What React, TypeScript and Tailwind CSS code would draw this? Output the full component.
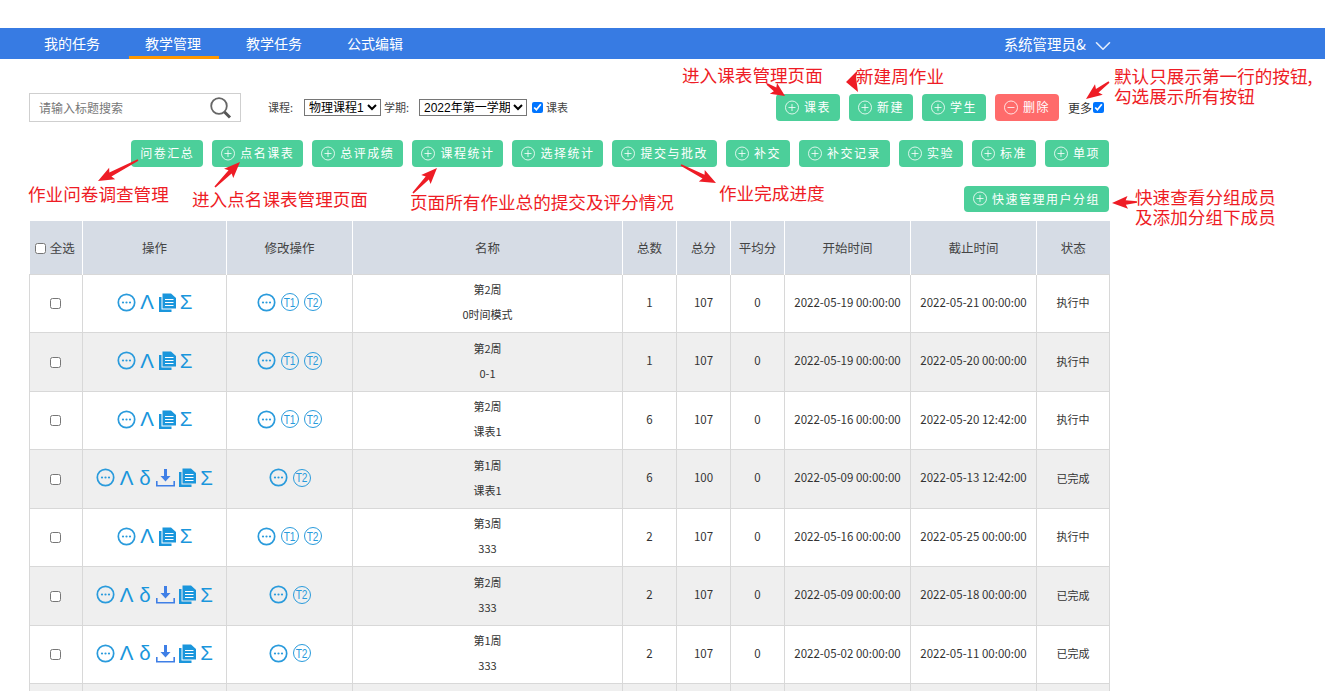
import { ReactNode } from "react";
import { ChevronDown } from "lucide-react";

const font = "font-['Noto_Sans_CJK_SC','Microsoft_YaHei',sans-serif]";

const PlusCircle = ({ minus = false }: { minus?: boolean }) => (
  <svg width="14" height="15" viewBox="0 0 14 15" fill="none" stroke="#ffffff" strokeOpacity="0.8" className="shrink-0">
    <circle cx="7" cy="7.500" r="6.500" strokeWidth="1" />
    <path d={minus ? "M3.500 7.500h7" : "M3.500 7.500h7M7 4v7"} strokeWidth="1" />
  </svg>
);

const ActionButton = ({ label, icon = true, red = false, h = "h-[27px]" }: { label: string; icon?: boolean; red?: boolean; h?: string }) => (
  <button className={`flex ${h} shrink-0 items-center gap-[5px] rounded-[4px] px-[9px] pb-[1px] text-[12px] tracking-[1.5px] text-white ${red ? "bg-[#ff6b6b]" : "bg-[#4ccf9a]"}`}>
    {icon && <PlusCircle minus={red} />}
    <span>{label}</span>
  </button>
);

const MoreIcon = () => (
  <svg width="19" height="19" viewBox="0 0 19 19" fill="none" className="shrink-0">
    <circle cx="9.500" cy="9.500" r="8.200" stroke="#2a9bdc" strokeWidth="1.700" />
    <circle cx="6" cy="9.500" r="1.100" fill="#2a9bdc" />
    <circle cx="9.500" cy="9.500" r="1.100" fill="#2a9bdc" />
    <circle cx="13" cy="9.500" r="1.100" fill="#2a9bdc" />
  </svg>
);

const FileIcon = () => (
  <svg width="17" height="19" viewBox="0 0 17 19" className="shrink-0">
    <path d="M0 4h2.500v12.500h10V19H0z" fill="#1a96dc" />
    <path d="M3.500 .5h8.500L17 5v10.500H3.500z" fill="#1a96dc" />
    <path d="M6 6.500h8.500M6 9.500h8.500M6 12.500h8.500" stroke="#ffffff" strokeWidth="1" />
  </svg>
);

const DownloadIcon = () => (
  <svg width="19" height="19" viewBox="0 0 19 19" className="shrink-0">
    <path d="M8 1h3v7h3.500L9.500 13.500 4.500 8H8z" fill="#3f7fe6" />
    <path d="M.8 13v4.800h17.400V13" fill="none" stroke="#3f7fe6" strokeWidth="1.600" />
  </svg>
);

const Glyph = ({ children, w }: { children: ReactNode; w: string }) => (
  <span className={`${w} shrink-0 text-center font-['Liberation_Sans',sans-serif] text-[20.500px] leading-[20px] text-[#1a96dc]`}>{children}</span>
);

const TBadge = ({ n }: { n: string }) => (
  <span className="flex h-[18px] w-[18px] shrink-0 items-center justify-center rounded-full border border-[#2a9bdc] font-['Liberation_Sans',sans-serif] text-[13px] leading-none text-[#2a9bdc]">
    <span className="scale-x-[0.78]">{n}</span>
  </span>
);

type Row = { week: string; name: string; total: number; score: number; start: string; end: string; done: boolean };

const rows: Row[] = [
  { week: "第2周", name: "0时间模式", total: 1, score: 107, start: "2022-05-19 00:00:00", end: "2022-05-21 00:00:00", done: false },
  { week: "第2周", name: "0-1", total: 1, score: 107, start: "2022-05-19 00:00:00", end: "2022-05-20 00:00:00", done: false },
  { week: "第2周", name: "课表1", total: 6, score: 107, start: "2022-05-16 00:00:00", end: "2022-05-20 12:42:00", done: false },
  { week: "第1周", name: "课表1", total: 6, score: 100, start: "2022-05-09 00:00:00", end: "2022-05-13 12:42:00", done: true },
  { week: "第3周", name: "333", total: 2, score: 107, start: "2022-05-16 00:00:00", end: "2022-05-25 00:00:00", done: false },
  { week: "第2周", name: "333", total: 2, score: 107, start: "2022-05-09 00:00:00", end: "2022-05-18 00:00:00", done: true },
  { week: "第1周", name: "333", total: 2, score: 107, start: "2022-05-02 00:00:00", end: "2022-05-11 00:00:00", done: true },
];

const headers = ["操作", "修改操作", "名称", "总数", "总分", "平均分", "开始时间", "截止时间", "状态"];

const Note = ({ className, children }: { className: string; children: ReactNode }) => (
  <div className={`absolute whitespace-nowrap text-[17.600px] leading-[20px] text-[#ee1c25] ${className}`}>{children}</div>
);

// tail x, y then tip x, y of the red callouts
const arrows = [
  [138, 160, 98, 181],
  [215, 187, 240, 162],
  [413, 193, 437, 168],
  [681, 165, 716, 183],
  [767, 84, 785, 96],
  [1109, 82, 1086, 99],
  [1137, 202, 1112, 203],
];

const arrowPath = ([x1, y1, x2, y2]: number[]) => {
  const len = Math.hypot(x2 - x1, y2 - y1);
  const ux = (x2 - x1) / len;
  const uy = (y2 - y1) / len;
  const px = -uy;
  const py = ux;
  const head = Math.min(14, len * 0.55);
  const at = (along: number, side: number) => `${x1 + ux * along + px * side} ${y1 + uy * along + py * side}`;
  const neck = len - head;
  return `M${at(0, 0.8)}L${at(neck, 2.2)}L${at(neck - 2, 6.5)}L${x2} ${y2}L${at(neck - 2, -6.5)}L${at(neck, -2.2)}L${at(0, -0.8)}z`;
};

const cell = "border border-[#d8d8d8] pb-[2px]";

const App = () => {
  return (
    <div className={`relative h-[691px] w-[1325px] overflow-hidden bg-white text-[#333] ${font}`}>
      <div className="h-[28px]" />
      <nav className="flex h-[31px] items-stretch bg-[#377be3] pl-[28px] pr-[209px] text-[14px] text-white">
        <div className="flex gap-[11px]">
          {["我的任务", "教学管理", "教学任务", "公式编辑"].map((item, i) => (
            <div key={item} className={`flex w-[90px] items-center justify-center pr-[2px] ${i === 1 ? "border-b-[3px] border-[#ff9800] pt-[3px]" : ""}`}>
              {item}
            </div>
          ))}
        </div>
        <div className="ml-auto flex items-center gap-[4px] text-[14.500px]">
          <span>系统管理员&amp;</span>
          <ChevronDown size={26} strokeWidth={1.5} className="mt-[3px] -my-[2px] text-white/85" />
        </div>
      </nav>

      <div className="ml-[29px] w-[1080px]">
        <div className="mt-[34px] flex h-[29px] items-center">
          <div className="flex h-[29px] w-[212px] items-center justify-between border border-[#cfcfcf] pl-[9px] pr-[7px] text-[12px] text-[#777]">
            <span>请输入标题搜索</span>
            <svg width="24" height="24" viewBox="0 0 24 24" fill="none">
              <circle cx="10" cy="10" r="7.800" stroke="#666" strokeWidth="1.800" />
              <path d="M15.500 16l5.500 5.500" stroke="#555" strokeWidth="3" />
            </svg>
          </div>
          <div className="ml-[27px] flex items-center text-[11px] text-[#444]">
            <span className="w-[36px]">课程:</span>
            <select className="h-[17px] w-[77px] border border-[#767676] font-['Liberation_Sans','Noto_Sans_CJK_SC',sans-serif] text-[12px] text-black">
              <option>物理课程1</option>
            </select>
            <span className="ml-[3px] w-[35px]">学期:</span>
            <select className="h-[17px] w-[108px] border border-[#767676] font-['Liberation_Sans','Noto_Sans_CJK_SC',sans-serif] text-[12px] text-black">
              <option>2022年第一学期</option>
            </select>
            <input type="checkbox" defaultChecked className="ml-[5px] h-[11px] w-[11px]" />
            <span className="ml-[3px]">课表</span>
          </div>
          <div className="ml-auto flex items-center gap-[9px]">
            <ActionButton label="课表" />
            <ActionButton label="新建" />
            <ActionButton label="学生" />
            <ActionButton label="删除" red />
            <div className="flex w-[41px] items-center gap-[1px] text-[12px] text-[#333]">
              <span>更多</span>
              <input type="checkbox" defaultChecked className="h-[11px] w-[11px]" />
            </div>
          </div>
        </div>

        <div className="mt-[18px] flex justify-end gap-[9px]">
          <ActionButton label="问卷汇总" icon={false} />
          <ActionButton label="点名课表" />
          <ActionButton label="总评成绩" />
          <ActionButton label="课程统计" />
          <ActionButton label="选择统计" />
          <ActionButton label="提交与批改" />
          <ActionButton label="补交" />
          <ActionButton label="补交记录" />
          <ActionButton label="实验" />
          <ActionButton label="标准" />
          <ActionButton label="单项" />
        </div>

        <div className="mt-[19px] flex justify-end">
          <ActionButton label="快速管理用户分组" h="h-[26px]" />
        </div>

        <table className="mt-[9px] w-[1080px] table-fixed border-collapse text-center text-[11.500px]">
          <colgroup>
            <col className="w-[53px]" />
            <col className="w-[144px]" />
            <col className="w-[126px]" />
            <col className="w-[270px]" />
            <col className="w-[54px]" />
            <col className="w-[54px]" />
            <col className="w-[54px]" />
            <col className="w-[126px]" />
            <col className="w-[126px]" />
            <col className="w-[73px]" />
          </colgroup>
          <thead>
            <tr className="h-[53px] bg-[#d6dce5] text-[12.500px] text-[#444]">
              <th className="border-r border-white pt-[2px] font-normal">
                <label className="flex items-center justify-center gap-[4px] pr-[2px]">
                  <input type="checkbox" className="h-[11px] w-[11px]" />
                  全选
                </label>
              </th>
              {headers.map((h) => (
                <th key={h} className="border-r border-white pt-[2px] font-normal last:border-r-0">{h}</th>
              ))}
            </tr>
          </thead>
          <tbody>
            {rows.map((row, i) => (
              <tr key={i} className={`h-[58.500px] ${i % 2 === 1 ? "bg-[#efefef]" : "bg-white"}`}>
                <td className={cell}>
                  <input type="checkbox" className="mr-[2px] h-[11px] w-[11px] align-middle" />
                </td>
                <td className={cell}>
                  <div className="flex items-center justify-center gap-[4px]">
                    <MoreIcon />
                    <Glyph w="w-[15px]">Λ</Glyph>
                    {row.done && <Glyph w="w-[14px]">δ</Glyph>}
                    {row.done && <DownloadIcon />}
                    <FileIcon />
                    <Glyph w="w-[13px]">Σ</Glyph>
                  </div>
                </td>
                <td className={cell}>
                  <div className="flex items-center justify-center gap-[5px]">
                    <MoreIcon />
                    {!row.done && <TBadge n="T1" />}
                    <TBadge n="T2" />
                  </div>
                </td>
                <td className={`${cell} text-[11px] leading-[25px]`}>
                  <div>{row.week}</div>
                  <div>{row.name}</div>
                </td>
                <td className={cell}>{row.total}</td>
                <td className={cell}>{row.score}</td>
                <td className={cell}>0</td>
                <td className={cell}>{row.start}</td>
                <td className={cell}>{row.end}</td>
                <td className={`${cell} text-[11px]`}>{row.done ? "已完成" : "执行中"}</td>
              </tr>
            ))}
            {/* next row only just enters the window */}
            <tr className="h-[58.500px] bg-[#efefef]">
              {Array.from({ length: 10 }).map((_, i) => (
                <td key={i} className={cell} />
              ))}
            </tr>
          </tbody>
        </table>
      </div>

      {/* annotations */}
      <svg width="1325" height="691" className="pointer-events-none absolute left-0 top-0">
        {arrows.map((a) => (
          <path key={a.join()} d={arrowPath(a)} fill="#ee1c25" />
        ))}
        <path d="M846 82L858 70L856 77L858 92z" fill="#ee1c25" />
      </svg>
      <Note className="left-[28px] top-[184px]">作业问卷调查管理</Note>
      <Note className="left-[192px] top-[189px]">进入点名课表管理页面</Note>
      <Note className="left-[410px] top-[192px]">页面所有作业总的提交及评分情况</Note>
      <Note className="left-[719px] top-[183px]">作业完成进度</Note>
      <Note className="left-[682px] top-[65px]">进入课表管理页面</Note>
      <Note className="left-[856px] top-[66px]">新建周作业</Note>
      <Note className="left-[1114px] top-[66px]">默认只展示第一行的按钮,</Note>
      <Note className="left-[1114px] top-[86px]">勾选展示所有按钮</Note>
      <Note className="left-[1135px] top-[187px]">快速查看分组成员</Note>
      <Note className="left-[1135px] top-[207px]">及添加分组下成员</Note>
    </div>
  );
};

export default App;
